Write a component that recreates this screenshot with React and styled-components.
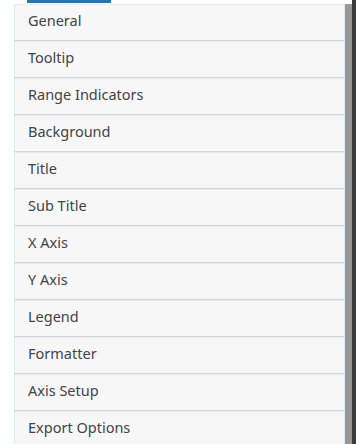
import React from "react";
import styled, { createGlobalStyle } from "styled-components";

const GlobalStyle = createGlobalStyle`
  html, body {
    margin: 0;
    padding: 0;
    background: #ffffff;
  }
  body {
    font-family: "Noto Sans", "Open Sans", sans-serif;
    overflow: hidden;
  }
`;

const Page = styled.div`
  display: flex;
  width: 356px;
  height: 444px;
  overflow: hidden;
`;

const Column = styled.div`
  display: flex;
  flex-direction: column;
  margin-left: 14px;
  width: 331px;
`;

const TabMark = styled.div`
  flex-shrink: 0;
  width: 84px;
  height: 3px;
  margin-left: 13px;
  margin-bottom: 1px;
  background: #1579c6;
`;

const List = styled.ul`
  flex-shrink: 0;
  list-style: none;
  margin: 0;
  padding: 0;
  border: 1px solid #dde9ef;
  border-top: none;
  border-bottom: none;
`;

const Item = styled.li`
  box-sizing: border-box;
  height: 37px;
  display: flex;
  align-items: center;
  padding: 0 0 6px 13px;
  background: #f7f7f7;
  border-top: 1px solid #e2ecf1;
  border-bottom: 1px solid #d3d7d9;
  font-size: 14.5px;
  color: #3f4448;
`;

const ScrollTrack = styled.div`
  width: 7px;
  margin-top: 4px;
  background: #979797;
`;

const Edge = styled.div`
  width: 4px;
  background: #3b3b3b;
`;

const sections = [
  "General",
  "Tooltip",
  "Range Indicators",
  "Background",
  "Title",
  "Sub Title",
  "X Axis",
  "Y Axis",
  "Legend",
  "Formatter",
  "Axis Setup",
  "Export Options",
];

export default function App() {
  return (
    <>
      <GlobalStyle />
      <Page>
        <Column>
          <TabMark />
          <List>
            {sections.map((name) => (
              <Item key={name}>{name}</Item>
            ))}
          </List>
        </Column>
        <ScrollTrack />
        <Edge />
      </Page>
    </>
  );
}
